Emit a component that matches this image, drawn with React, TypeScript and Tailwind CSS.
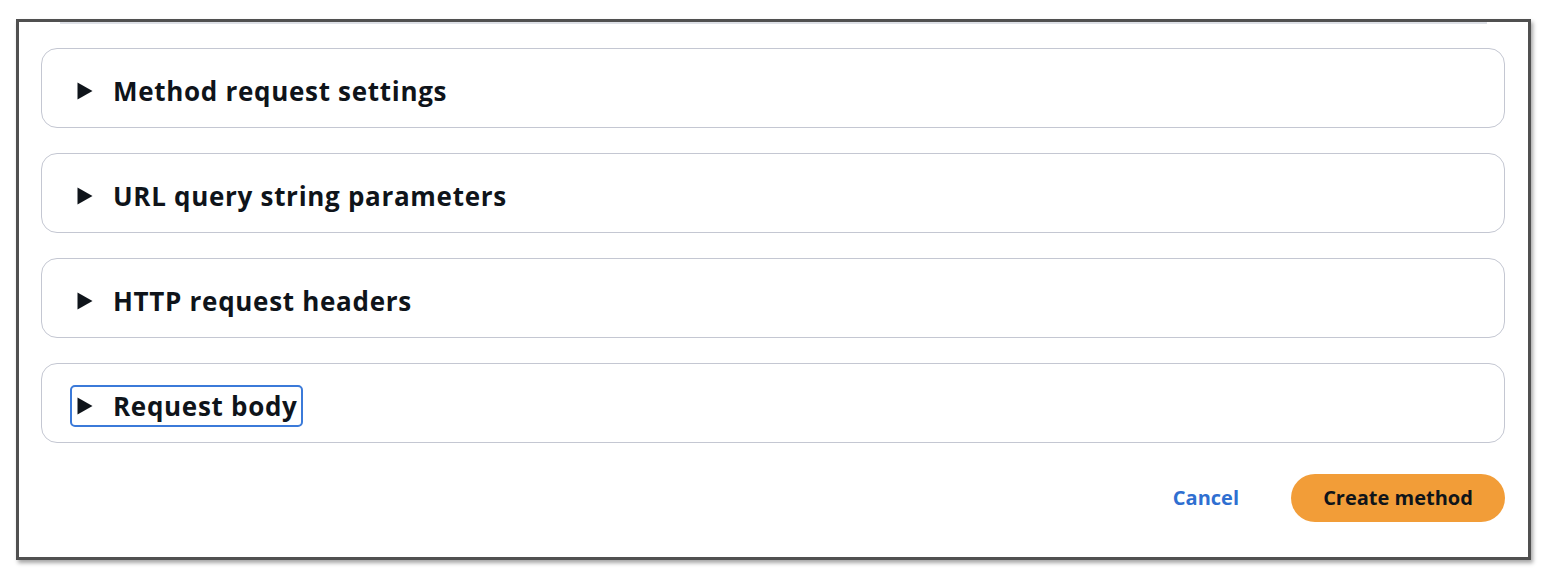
import React from "react";

const Tri = () => (
  <svg width="16" height="18" viewBox="0 0 16 18" className="shrink-0">
    <path d="M0.5 0.5 L15.5 9 L0.5 17.5 Z" fill="#0f141a" />
  </svg>
);

const Section = ({ title, focused }: { title: string; focused?: boolean }) => (
  <div className="h-[80px] rounded-[16px] border border-[#c4c7d2] bg-white flex items-center pl-[28px] pt-[6px]">
    <span
      className={
        "flex items-center gap-[20px] pl-[5px] pr-[3px] h-[42px] rounded-[5px] border-2 " +
        (focused ? "border-[#3b7ad9]" : "border-transparent")
      }
    >
      <Tri />
      <span className="text-[26px] font-bold text-[#0f141a] leading-[37px] tracking-[0.7px]">{title}</span>
    </span>
  </div>
);

export default function App() {
  return (
    <div
      className="w-[1552px] h-[578px] bg-white pt-[19px] pl-[16px]"
      style={{ fontFamily: '"Open Sans", "Noto Sans", sans-serif' }}
    >
      <div className="w-[1515px] h-[541px] border-[3px] border-[#505050] bg-white shadow-[2px_3px_4px_rgba(0,0,0,0.35)] flex flex-col">
        <div className="ml-[41px] w-[1427px] h-[2px] bg-[#dde0e6]" />
        <div className="flex flex-col gap-[25px] pl-[22px] pr-[23px] pt-[24px]">
          <Section title="Method request settings" />
          <Section title="URL query string parameters" />
          <Section title="HTTP request headers" />
          <Section title="Request body" focused />
        </div>
        <div className="flex items-center justify-end pr-[23px] pt-[31px] gap-[52px]">
          <span className="text-[20px] font-bold text-[#2f6fd1]">Cancel</span>
          <button className="h-[48px] w-[214px] rounded-full bg-[#f29d38] text-[20px] font-bold text-[#0f141a]">
            Create method
          </button>
        </div>
      </div>
    </div>
  );
}
